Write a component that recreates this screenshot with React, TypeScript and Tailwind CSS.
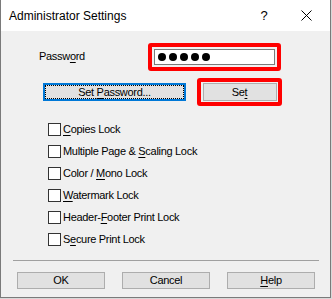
import React from 'react';

const font = { fontFamily: '"Liberation Sans", Arial, sans-serif' };

// label with one underlined accelerator character
function Acc({ text, at }: { text: string; at: number }) {
  return (
    <span>
      {text.slice(0, at)}
      <u className="underline-offset-2">{text[at]}</u>
      {text.slice(at + 1)}
    </span>
  );
}

const locks = [
  { text: 'Copies Lock', at: 0 },
  { text: 'Multiple Page & Scaling Lock', at: 16 },
  { text: 'Color / Mono Lock', at: 8 },
  { text: 'Watermark Lock', at: 0 },
  { text: 'Header-Footer Print Lock', at: 7 },
  { text: 'Secure Print Lock', at: 1 },
];

export default function App() {
  return (
    <div className="w-[332px] h-[299px] bg-[#d8d8d8]" style={font}>
      <div className="w-[331px] h-[298px] flex flex-col border-l border-r border-b border-[#7a7a7a] bg-[#f0f0f0]">
        {/* title bar */}
        <div className="h-[31px] bg-white flex items-center text-[12px] text-black">
          <div className="pl-[8px] flex-1">Administrator Settings</div>
          <div className="w-[12px] text-center mr-[31px] text-[13px]">?</div>
          <svg width="11" height="11" viewBox="0 0 11 11" className="mr-[18px]">
            <path d="M0.5 0.5 L10.5 10.5 M10.5 0.5 L0.5 10.5" stroke="#000" strokeWidth="1" />
          </svg>
        </div>

        <div className="flex-1 flex flex-col text-[11px] tracking-[-0.3px] text-black">
          {/* password */}
          <div className="mt-[12px] h-[28px] flex items-center pl-[38px]">
            <div className="w-[109px] -mt-[2px]">
              <Acc text="Password" at={5} />
            </div>
            <div className="w-[133px] h-[28px] border-4 border-[#ff0000] rounded-[3px] p-[2px]">
              <div className="h-full bg-white border border-[#7a7a7a] flex items-center gap-[3px] pl-[3px]">
                {[0, 1, 2, 3, 4].map((i) => (
                  <div key={i} className="w-[8px] h-[8px] rounded-full bg-black" />
                ))}
              </div>
            </div>
          </div>

          {/* buttons */}
          <div className="mt-[7px] h-[28px] flex items-center">
            <div className="ml-[42px] w-[143px] h-[18px] border-2 border-[#0078d7] bg-[#e1e1e1]">
              <div className="w-full h-full border border-dotted border-black flex items-center justify-center">
                <Acc text="Set Password..." at={4} />
              </div>
            </div>
            <div className="ml-[11px] w-[85px] h-[28px] border-4 border-[#ff0000] rounded-[3px] flex items-center justify-center">
              <div className="w-[74px] h-[18px] bg-[#e1e1e1] border border-[#adadad] flex items-center justify-center">
                <Acc text="Set" at={2} />
              </div>
            </div>
          </div>

          {/* locks */}
          <div className="mt-[12px] flex flex-col">
            {locks.map((l) => (
              <div key={l.text} className="h-[22px] flex items-center pl-[47px]">
                <div className="w-[13px] h-[13px] border border-[#333] bg-white" />
                <div className="ml-[2px]">
                  <Acc text={l.text} at={l.at} />
                </div>
              </div>
            ))}
          </div>

          <div className="mt-[10px] ml-[12px] mr-[11px] h-px bg-[#a0a0a0]" />

          <div className="mt-[11px] flex pl-[16px] gap-[17px]">
            {[
              { text: 'OK', at: -1 },
              { text: 'Cancel', at: -1 },
              { text: 'Help', at: 0 },
            ].map((b) => (
              <div
                key={b.text}
                className="w-[88px] h-[17px] bg-[#e1e1e1] border border-[#adadad] flex items-center justify-center"
              >
                {b.at >= 0 ? <Acc text={b.text} at={b.at} /> : b.text}
              </div>
            ))}
          </div>
        </div>
      </div>
    </div>
  );
}
